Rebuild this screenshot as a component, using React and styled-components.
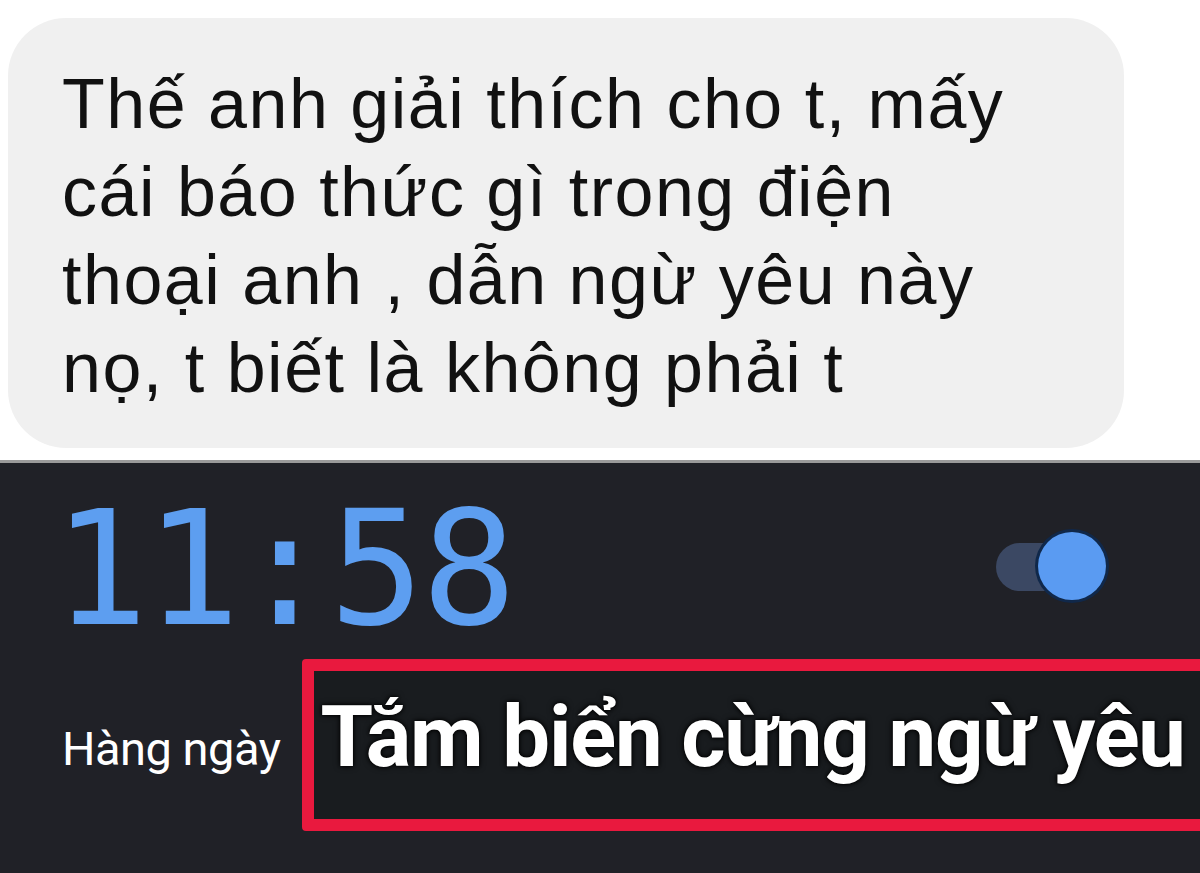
import React from "react";
import styled, { createGlobalStyle } from "styled-components";

const GlobalStyle = createGlobalStyle`
  html, body {
    margin: 0;
    padding: 0;
    background: #ffffff;
  }
  body {
    overflow: hidden;
  }
`;

const Screen = styled.div`
  width: 1200px;
  height: 873px;
  display: flex;
  flex-direction: column;
  overflow: hidden;
`;

const ChatArea = styled.div`
  background: #ffffff;
  padding: 18px 76px 12px 8px;
`;

const Bubble = styled.div`
  background: #f0f0f0;
  border-radius: 58px;
  padding: 42px 30px 36px 54px;
  font-family: "Liberation Sans", Arial, sans-serif;
  font-size: 70px;
  line-height: 88px;
  letter-spacing: 1.5px;
  color: #111111;
  white-space: nowrap;
`;

const AlarmPanel = styled.div`
  flex: 1;
  background: #202127;
  border-top: 3px solid #9a9a9a;
  padding: 19px 0 0 62px;
  display: flex;
  flex-direction: column;
`;

const TopRow = styled.div`
  display: flex;
  align-items: center;
  justify-content: space-between;
  padding-right: 94px;
`;

const Time = styled.div`
  margin-left: -9px;
  padding-top: 4px;
  font-family: "DejaVu Sans Mono", "Liberation Mono", monospace;
  font-size: 158px;
  line-height: 166px;
  color: #5d9ef0;
  letter-spacing: -3px;
`;

const Toggle = styled.div`
  position: relative;
  width: 110px;
  height: 76px;
`;

const Track = styled.div`
  position: absolute;
  left: 0;
  top: 14px;
  width: 90px;
  height: 48px;
  border-radius: 24px;
  background: #3b4863;
`;

const Thumb = styled.div`
  position: absolute;
  right: 0;
  top: 3px;
  width: 68px;
  height: 68px;
  border-radius: 50%;
  background: #5a9bf2;
  box-shadow: 0 0 0 3px #10284a;
`;

const LabelRow = styled.div`
  display: flex;
  align-items: center;
  margin-top: 7px;
  gap: 22px;
`;

const Repeat = styled.span`
  font-family: Roboto, "Liberation Sans", sans-serif;
  font-size: 47px;
  letter-spacing: -0.5px;
  color: #ffffff;
  padding-top: 6px;
`;

const Highlight = styled.div`
  box-sizing: border-box;
  flex: 1;
  margin-right: -20px;
  height: 172px;
  border: 12px solid #e9193e;
  border-radius: 4px;
  background: #191c1f;
  display: flex;
  align-items: center;
  padding-left: 6px;
  padding-bottom: 16px;
`;

const Label = styled.span`
  font-family: Roboto, "Liberation Sans", sans-serif;
  font-weight: 700;
  font-size: 85px;
  color: #ffffff;
  white-space: nowrap;
  letter-spacing: -1.2px;
  text-shadow: 0 0 3px #000000, 0 0 6px #000000;
`;

export default function App() {
  return (
    <Screen>
      <GlobalStyle />
      <ChatArea>
        <Bubble>
          Thế anh giải thích cho t, mấy
          <br />
          cái báo thức gì trong điện
          <br />
          thoại anh , dẫn ngừ yêu này
          <br />
          nọ, t biết là không phải t
        </Bubble>
      </ChatArea>
      <AlarmPanel>
        <TopRow>
          <Time>11:58</Time>
          <Toggle>
            <Track />
            <Thumb />
          </Toggle>
        </TopRow>
        <LabelRow>
          <Repeat>Hàng ngày</Repeat>
          <Highlight>
            <Label>Tắm biển cừng ngừ yêu</Label>
          </Highlight>
        </LabelRow>
      </AlarmPanel>
    </Screen>
  );
}
